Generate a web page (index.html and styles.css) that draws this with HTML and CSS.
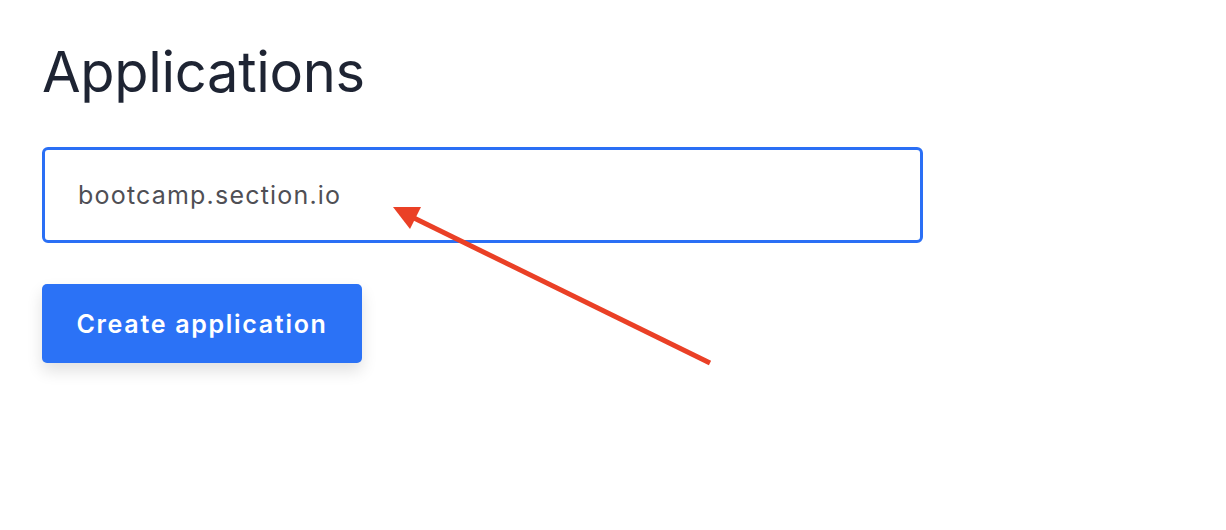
FILE: index.html
```html
<!DOCTYPE html>
<html lang="en">
<head>
<meta charset="utf-8">
<link rel="stylesheet" href="styles.css">
</head>
<body>
<main class="page">
  <h1 class="title">Applications</h1>
  <div class="field">bootcamp.section.io</div>
  <button class="btn">Create application</button>
</main>
<svg class="arrow" width="1226" height="530" viewBox="0 0 1226 530">
  <line x1="414" y1="218" x2="710" y2="363" stroke="#ea4026" stroke-width="5"/>
  <polygon points="393,207 421,207 410,229" fill="#ea4026"/>
</svg>
</body>
</html>
```
FILE: styles.css
```css
html, body { margin: 0; padding: 0; background: #fff; }
body { font-family: "Inter", "Roboto", sans-serif; position: relative; width: 1226px; height: 530px; overflow: hidden; }
.page { padding: 34px 0 0 42px; display: flex; flex-direction: column; align-items: flex-start; }
.title { margin: 0; font-size: 56px; font-weight: 400; line-height: 76px; color: #1e2433; letter-spacing: -0.3px; }
.field { margin-top: 37px; box-sizing: border-box; width: 881px; height: 96px; border: 3px solid #2a6ff5; border-radius: 6px; padding: 0 0 0 33px; display: flex; align-items: center; font-size: 25px; letter-spacing: 1.2px; color: #4f4f55; }
.btn { margin-top: 41px; width: 320px; height: 79px; border: none; border-radius: 5px; background: #2b72f6; color: #fff; font-family: inherit; font-size: 25px; font-weight: 600; letter-spacing: 1.7px; box-shadow: 0 8px 16px rgba(0,0,0,0.12); }
.arrow { position: absolute; left: 0; top: 0; pointer-events: none; }
```
